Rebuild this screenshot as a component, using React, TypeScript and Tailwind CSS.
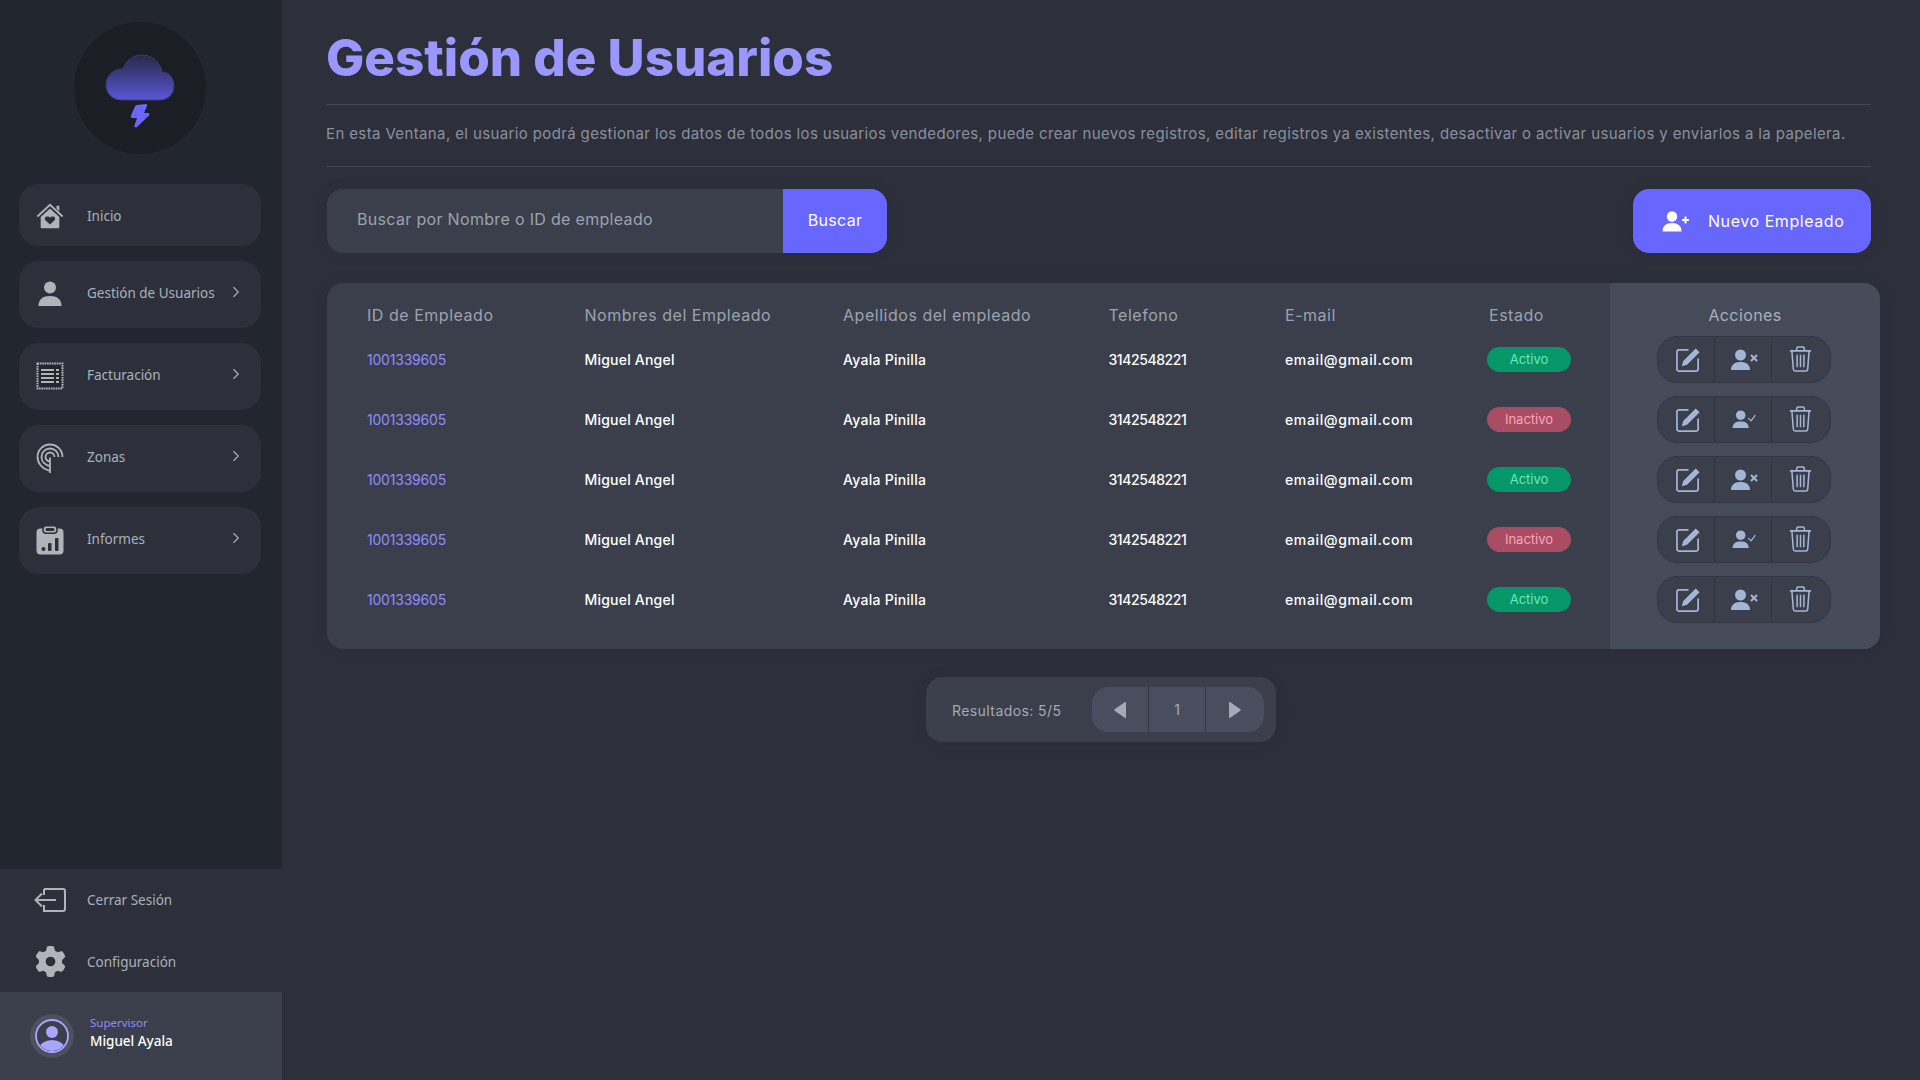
import React from "react";
import { ChevronRight } from "lucide-react";
import { FaGear } from "react-icons/fa6";

const rows = [true, false, true, false, true];
const gridCols = "grid grid-cols-[217.5px_258.5px_265.5px_176.5px_204px_84px]";

function Logo() {
  return (
    <svg viewBox="0 0 132 132" className="w-[132px] h-[132px]">
      <defs>
        <linearGradient id="cloudGrad" x1="0" y1="0" x2="0" y2="1">
          <stop offset="0" stopColor="#262a45" />
          <stop offset="1" stopColor="#5a55d6" />
        </linearGradient>
      </defs>
      <circle cx="66" cy="66" r="66" fill="#1b1e25" />
      <path d="M47 78 C38 78 32 71 32 63 C32 54 39 47 49 47 C52 38 60 33 68 33 C78 33 86 40 88 50 C95 50 100 56 100 64 C100 72 94 78 86 78 Z" fill="url(#cloudGrad)" stroke="#3b3a7a" strokeWidth="1" />
      <path d="M63 83 L72 82 C73 82 73.500 83 73 84 L70 91 L74 91 C75.500 91 76 92.500 75 93.500 L63 105 C61.500 106 60 105 60.500 103.500 L63 96 L58.500 96 C57 96 56.500 95 57 93.500 L61 84.500 C61.500 83.500 62 83 63 83 Z" fill="#6a66ff" />
    </svg>
  );
}

const navFill = "#b1b3b8";

function HomeIcon() {
  return (
    <svg viewBox="0 0 30 28" className="w-[30px] h-[28px]">
      <path d="M1.500 14.500 L15 2 L28.500 14.500" fill="none" stroke={navFill} strokeWidth="2" />
      <path d="M5 15 L15 6 L25 15 V26 C25 26.600 24.600 27 24 27 H6 C5.400 27 5 26.600 5 26 Z" fill={navFill} />
      <path d="M22 3 H25 V9 L22 6 Z" fill={navFill} />
      <path d="M15 23 L10 18.500 C8.500 16.500 10 14.500 12 14.500 C13.500 14.500 14.500 15 15 16 C15.500 15 16.500 14.500 18 14.500 C20 14.500 21.500 16.500 20 18.500 Z" fill="#2d303b" />
    </svg>
  );
}
function UserIcon() {
  return (
    <svg viewBox="0 0 24 26" className="w-[24px] h-[26px]">
      <circle cx="12" cy="6.500" r="6" fill={navFill} />
      <path d="M0.500 25 C0.500 18 5 15 12 15 C19 15 23.500 18 23.500 25 Z" fill={navFill} />
    </svg>
  );
}
function InvoiceIcon() {
  return (
    <svg viewBox="0 0 28 28" className="w-[28px] h-[28px]">
      <rect x="1.500" y="1.500" width="25" height="25" fill="none" stroke={navFill} strokeWidth="2" strokeDasharray="1.600 0.800" />
      <rect x="3" y="3" width="22" height="22" fill="#22262f" />
      <g fill={navFill}>
        <rect x="5" y="7" width="13" height="2" /><rect x="5" y="11" width="13" height="2" /><rect x="5" y="15" width="13" height="2" /><rect x="5" y="19" width="13" height="2" />
        <rect x="20" y="7" width="3" height="2" /><rect x="20" y="11" width="3" height="2" /><rect x="20" y="15" width="3" height="2" /><rect x="20" y="19" width="3" height="2" />
      </g>
    </svg>
  );
}
function ZonesIcon() {
  return (
    <svg viewBox="0 0 28 30" className="w-[28px] h-[30px]" fill="none" stroke={navFill} strokeWidth="1.800">
      <path d="M14 28 C6 26 1.500 20 1.500 14 C1.500 7 7 1.500 14 1.500 C21 1.500 26.500 7 26.500 14" />
      <path d="M14 23 C9 22 5.500 18.500 5.500 14 C5.500 9 9.500 5.500 14 5.500 C18.500 5.500 22.500 9 22.500 14" />
      <path d="M14 18.500 C11.500 18 9.500 16.500 9.500 14 C9.500 11.500 11.500 9.500 14 9.500 C16.500 9.500 18.500 11.500 18.500 14" />
      <path d="M14 30 V14.500" />
    </svg>
  );
}
function ReportIcon() {
  return (
    <svg viewBox="0 0 28 30" className="w-[28px] h-[30px]">
      <rect x="0.500" y="3.500" width="27" height="26" rx="4" fill={navFill} />
      <rect x="7" y="0.800" width="14" height="7.500" rx="3" fill={navFill} stroke="#2d303b" strokeWidth="1.500" />
      <rect x="9.500" y="3" width="9" height="3" rx="1.500" fill="#2d303b" />
      <circle cx="7.500" cy="24" r="2" fill="#2d303b" />
      <rect x="12" y="18" width="3.500" height="8" rx="1" fill="#2d303b" />
      <rect x="19" y="13" width="3.500" height="13" rx="1" fill="#2d303b" />
    </svg>
  );
}
function LogoutIcon() {
  return (
    <svg viewBox="0 0 32 24" className="w-[32px] h-[24px]" fill="none" stroke={navFill} strokeWidth="2">
      <path d="M10 1 H29 C30 1 31 2 31 3 V21 C31 22 30 23 29 23 H10 V17" />
      <path d="M10 1 V7" />
      <path d="M22 12 H2 M8 5.500 L1.500 12 L8 18.500" />
    </svg>
  );
}

function NavItem({ icon, label, tall, chevron }: { icon: React.ReactNode; label: string; tall?: boolean; chevron?: boolean }) {
  return (
    <div className={`w-[242px] ml-[19px] flex items-center rounded-[20px] bg-[#2d303b] pl-[17px] pr-[16px] ${tall ? "h-[67px]" : "h-[62px]"}`}>
      <div className={`w-[28px] flex justify-center shrink-0 ${tall ? "pb-[2px]" : "pt-[1px]"}`}>{icon}</div>
      <span className={`ml-[23px] text-[13.5px] text-[#a9b0ba] font-['Noto_Sans','Open_Sans',sans-serif] ${tall ? "pb-[3px]" : "pt-[2px]"}`}>{label}</span>
      {chevron && <ChevronRight className="ml-auto w-[18px] h-[18px] mb-[6px] text-[#a9b0ba]" strokeWidth={1.500} />}
    </div>
  );
}

function EditIcon() {
  return (
    <svg viewBox="0 0 26 26" className="w-[25px] h-[25px]" fill="none" stroke="#a3b6d6" strokeWidth="1.800">
      <path d="M13 3 H3 C1.900 3 1 3.900 1 5 V23 C1 24.100 1.900 25 3 25 H21 C22.100 25 23 24.100 23 23 V12" />
      <path d="M6 20 L7.500 14.500 L19 3 L23 7 L11.500 18.500 Z M20.500 1.500 L24.500 5.500 L23 7 L19 3 Z" fill="#a3b6d6" stroke="none" />
    </svg>
  );
}
function TrashIcon() {
  return (
    <svg viewBox="0 0 24 27" className="w-[23px] h-[26px]" fill="none" stroke="#a3b6d6" strokeWidth="1.600">
      <path d="M1 5 H23" strokeWidth="2" />
      <path d="M8 5 V2.500 C8 1.700 8.700 1 9.500 1 H14.500 C15.300 1 16 1.700 16 2.500 V5" />
      <path d="M3 5 L4.500 24 C4.600 25.200 5.500 26 6.500 26 H17.500 C18.500 26 19.400 25.200 19.500 24 L21 5" />
      <path d="M8.500 9 V22 M12 9 V22 M15.500 9 V22" />
    </svg>
  );
}
function PersonMark({ active, color = "#a3b6d6" }: { active: boolean; color?: string }) {
  if (active) {
    return (
      <svg viewBox="0 0 28 22" className="w-[28px] h-[22px]">
        <circle cx="10.500" cy="6" r="5.500" fill={color} />
        <path d="M1 21 C1 15.500 5 13 10.500 13 C16 13 20 15.500 20 21 Z" fill={color} />
        <path d="M21 6 L27 12 M27 6 L21 12" stroke={color} strokeWidth="2" />
      </svg>
    );
  }
  return (
    <svg viewBox="0 0 26 20" className="w-[25px] h-[19px]">
      <circle cx="10" cy="5.500" r="5" fill={color} />
      <path d="M1.500 19 C1.500 14 5 12 10 12 C15 12 18.500 14 18.500 19 Z" fill={color} />
      <path d="M18 8.500 L21 11.500 L25.500 5.500" stroke={color} strokeWidth="1.300" fill="none" />
    </svg>
  );
}

function Actions({ active }: { active: boolean }) {
  return (
    <div className="flex h-[47px] w-[174px] rounded-[20px] bg-[#3a3f4b] border border-[#333743] overflow-hidden">
      <div className="w-[57px] pl-[4px] flex items-center justify-center border-r border-[#2f333e]"><EditIcon /></div>
      <div className="w-[57px] pl-[1px] pt-[1px] flex items-center justify-center border-r border-[#2f333e]"><PersonMark active={active} /></div>
      <div className="flex-1 pr-[2px] flex items-center justify-center"><TrashIcon /></div>
    </div>
  );
}

export default function App() {
  return (
    <div className="flex h-[1080px] w-[1920px] overflow-hidden bg-[#2d303b] font-['Inter',sans-serif]">
      <aside className="w-[282px] shrink-0 h-full flex flex-col bg-[#22262f]">
        <div className="pt-[22px] pr-[2px] flex justify-center"><Logo /></div>
        <nav className="mt-[30px] flex flex-col gap-[15px]">
          <NavItem icon={<HomeIcon />} label="Inicio" />
          <NavItem icon={<UserIcon />} label="Gestión de Usuarios" tall chevron />
          <NavItem icon={<InvoiceIcon />} label="Facturación" tall chevron />
          <NavItem icon={<ZonesIcon />} label="Zonas" tall chevron />
          <NavItem icon={<ReportIcon />} label="Informes" tall chevron />
        </nav>
        <div className="mt-auto bg-[#2d303b] font-['Noto_Sans',sans-serif] text-[13.5px] text-[#a9b0ba]">
          <div className="h-[62px] flex items-center pl-[34px]">
            <LogoutIcon />
            <span className="ml-[21px] pt-[1px]">Cerrar Sesión</span>
          </div>
          <div className="h-[61px] flex items-center pl-[35px]">
            <FaGear className="w-[31px] h-[31px] text-[#b1b3b8]" />
            <span className="ml-[21px] pt-[1px]">Configuración</span>
          </div>
        </div>
        <div className="h-[88px] bg-[#3a3f4b] flex items-center pl-[30px] font-['Noto_Sans',sans-serif]">
          <div className="w-[44px] h-[44px] rounded-full bg-[#4d515e] flex items-center justify-center">
            <svg viewBox="0 0 34 34" className="w-[34px] h-[34px]">
              <defs><clipPath id="avatarClip"><circle cx="17" cy="17" r="15" /></clipPath></defs>
              <circle cx="17" cy="17" r="16" fill="#3a3f4b" stroke="#a9a6ff" strokeWidth="1.800" />
              <g clipPath="url(#avatarClip)" fill="#a9a6ff">
                <circle cx="17" cy="13" r="6" />
                <ellipse cx="17" cy="30" rx="13" ry="9" />
              </g>
            </svg>
          </div>
          <div className="ml-[16px] flex flex-col pb-[7px]">
            <span className="text-[11.5px] leading-[16px] text-[#8f8bff]">Supervisor</span>
            <span className="text-[13.5px] leading-[20px] font-medium text-white">Miguel Ayala</span>
          </div>
        </div>
      </aside>

      <main className="flex-1 h-full pl-[44px] pr-[49px] flex flex-col">
        <div className="h-[105px] border-b border-[#444853] flex items-center pt-[10px]">
          <h1 className="text-[51px] font-extrabold leading-none text-[#9a97ff]">Gestión de Usuarios</h1>
        </div>
        <div className="h-[62px] border-b border-[#444853] flex items-center pb-[2px]">
          <p className="text-[15px] text-[#8a8f9e] tracking-[0.025em] whitespace-nowrap">En esta Ventana, el usuario podrá gestionar los datos de todos los usuarios vendedores, puede crear nuevos registros, editar registros ya existentes, desactivar o activar usuarios y enviarlos a la papelera.</p>
        </div>
        <div className="mt-[22px] flex justify-between">
          <div className="ml-[1px] flex h-[64px] w-[560px] rounded-[16px] overflow-hidden bg-[#3a3f4b] shadow-[0_0_16px_rgba(0,0,0,0.08)]">
            <div className="flex-1 flex items-center pl-[30px] pb-[4px] text-[16px] text-[#9ca3af] tracking-[0.02em]">Buscar por Nombre o ID de empleado</div>
            <div className="w-[104px] bg-[#6766ff] pb-[2px] flex items-center justify-center text-white text-[16px] font-normal tracking-[0.02em]">Buscar</div>
          </div>
          <div className="flex h-[64px] w-[238px] rounded-[16px] bg-[#6766ff] items-center pl-[29px] text-white shadow-[0_0_16px_rgba(0,0,0,0.08)]">
            <svg viewBox="0 0 27 21" className="w-[27px] h-[21px]" fill="#fff">
              <circle cx="10" cy="5.500" r="5.200" />
              <path d="M0.500 20.500 C0.500 15 4 12 10 12 C16 12 19.500 15 19.500 20.500 Z" />
              <path d="M20 9 H27 M23.500 5.500 V12.500" stroke="#fff" strokeWidth="2" />
            </svg>
            <span className="ml-[19px] pb-[1px] text-[16px] tracking-[0.035em]">Nuevo Empleado</span>
          </div>
        </div>

        <div className="ml-[1px] -mr-[9px] mt-[30px] h-[366px] flex rounded-[16px] overflow-hidden bg-[#3a3f4b] shadow-[0_0_16px_rgba(0,0,0,0.08)]">
          <div className="w-[1283px] pl-[40px] pt-[16px]">
            <div className={`${gridCols} h-[31px] items-center text-[16px] text-[#9ca3af] tracking-[0.033em]`}>
              <span>ID de Empleado</span>
              <span>Nombres del Empleado</span>
              <span>Apellidos del empleado</span>
              <span>Telefono</span>
              <span>E-mail</span>
              <span>Estado</span>
            </div>
            {rows.map((active, i) => (
              <div key={i} className={`${gridCols} h-[60px] items-center pb-[1px] text-[14px] font-medium text-white`}>
                <span className="text-[#8f8bff] font-normal tracking-[-0.015em] pb-[1px]">1001339605</span>
                <span className="tracking-[0.015em] pb-[1px]">Miguel Angel</span>
                <span className="tracking-[0.02em] pb-[1px]">Ayala Pinilla</span>
                <span className="tracking-[-0.03em] pb-[1px]">3142548221</span>
                <span className="tracking-[0.045em] pb-[1px]">email@gmail.com</span>
                <span className={`h-[25px] w-[84px] -ml-[2px] rounded-full flex items-center justify-center text-[13px] font-normal ${active ? "bg-[#059669] text-[#6ee7b7]" : "bg-[#a84d63] text-[#fda4b8]"}`}>
                  {active ? "Activo" : "Inactivo"}
                </span>
              </div>
            ))}
          </div>
          <div className="flex-1 bg-[#464b59] pt-[16px] flex flex-col items-center">
            <div className="h-[31px] flex items-center text-[16px] text-[#a9b0ba] tracking-[0.025em]">Acciones</div>
            {rows.map((active, i) => (
              <div key={i} className="h-[60px] flex items-center pb-[2px] pr-[2px]"><Actions active={active} /></div>
            ))}
          </div>
        </div>

        <div className="-mr-[5px] mt-[28px] flex justify-center">
          <div className="flex items-center h-[65px] w-[350px] rounded-[16px] bg-[#3a3f4b] pl-[26px] shadow-[0_0_16px_rgba(0,0,0,0.08)]">
            <span className="w-[140px] pt-[1px] text-[14px] text-[#a3a9b5] tracking-[0.03em] shrink-0">Resultados: 5/5</span>
            <div className="flex h-[45px] w-[172px] rounded-[16px] overflow-hidden bg-[#494e5e] text-[#a3a9b5] text-[14px]">
              <div className="w-[57px] flex items-center justify-center border-r border-[#343843]">
                <svg viewBox="0 0 12 18" className="w-[12px] h-[18px]"><path d="M11 1 C11.500 0.800 12 1 12 2 V16 C12 17 11.500 17.200 11 17 L1 10 C0 9.400 0 8.600 1 8 Z" fill="#a3a9b5" /></svg>
              </div>
              <div className="w-[57px] flex items-center justify-center border-r border-[#343843]">1</div>
              <div className="flex-1 flex items-center justify-center">
                <svg viewBox="0 0 12 18" className="w-[12px] h-[18px]"><path d="M1 1 C0.500 0.800 0 1 0 2 V16 C0 17 0.500 17.200 1 17 L11 10 C12 9.400 12 8.600 11 8 Z" fill="#a3a9b5" /></svg>
              </div>
            </div>
          </div>
        </div>
      </main>
    </div>
  );
}
